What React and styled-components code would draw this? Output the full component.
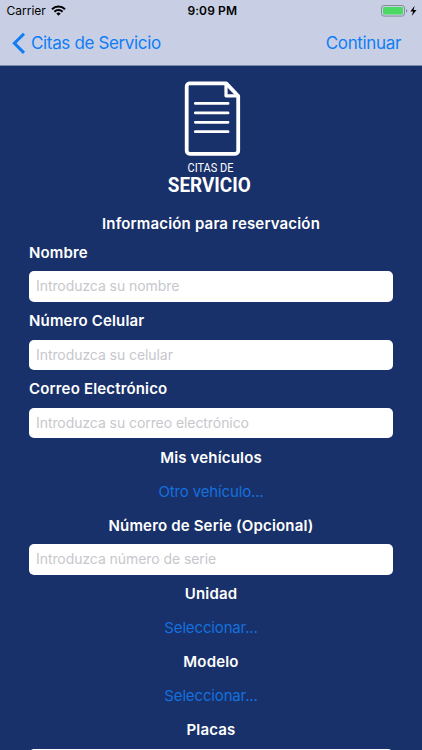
import React, { useState } from "react";
import styled, { createGlobalStyle } from "styled-components";

const fields = [
  { id: "nombre", label: "Nombre", align: "left", placeholder: "Introduzca su nombre" },
  { id: "celular", label: "Número Celular", align: "left", placeholder: "Introduzca su celular" },
  { id: "correo", label: "Correo Electrónico", align: "left", placeholder: "Introduzca su correo electrónico" },
  { id: "vehiculos", label: "Mis vehículos", select: "Otro vehículo..." },
  { id: "serie", label: "Número de Serie (Opcional)", placeholder: "Introduzca número de serie" },
  { id: "unidad", label: "Unidad", select: "Seleccionar..." },
  { id: "modelo", label: "Modelo", select: "Seleccionar..." },
  { id: "placas", label: "Placas", placeholder: "Introduzca sus placas" },
];

const StatusBar = () => (
  <Status>
    <Carrier>
      Carrier
      <svg width="15" height="11" viewBox="0 0 15 11">
        <g fill="none" stroke="#000" strokeWidth="2">
          <path d="M1 4.3a9.2 9.2 0 0 1 13 0" />
          <path d="M3.4 6.8a5.8 5.8 0 0 1 8.2 0" />
        </g>
        <path d="M7.5 10.8 5.3 8.6a3.1 3.1 0 0 1 4.400 0z" />
      </svg>
    </Carrier>
    <Clock>9:09 PM</Clock>
    <Battery>
      <svg width="36" height="12" viewBox="0 0 36 12">
        <rect x="0.5" y="0.5" width="23" height="10.6" rx="2.4" fill="none" stroke="#858b99" />
        <rect x="2" y="2" width="20" height="7.6" rx="1" fill="#4cd964" />
        <path d="M25 4q1.3.4 1.3 1.8T25 7.6z" fill="#858b99" />
        <path d="M33.6.8 29.4 6.4h2.7l-1.3 4.6 4.7-6h-2.9z" />
      </svg>
    </Battery>
  </Status>
);

const Logo = () => (
  <svg width="130" height="130" viewBox="146 70 130 130">
    <g fill="none" stroke="#fff" strokeLinejoin="round">
      <path
        d="M189.700 83.400h36.5l12 12.600v54.8a3 3 0 0 1-3 3h-45.5a3 3 0 0 1-3-3V86.400a3 3 0 0 1 3-3z"
        strokeWidth="3.8"
      />
      <path d="M226 84v11.800h12" strokeWidth="3.2" />
      <path
        d="M195.300 103.400h32.800M195.300 112.900h32.800M195.300 122.300h32.800M195.300 131.700h32.800"
        strokeWidth="2.7"
        strokeLinecap="round"
      />
    </g>
    <g fill="#fff" fontFamily="Roboto, sans-serif">
      <text x="187.5" y="172" fontSize="12.6" textLength="46" lengthAdjust="spacingAndGlyphs">
        CITAS DE
      </text>
      <text x="167.8" y="191.5" fontSize="19.6" fontWeight="700" textLength="83" lengthAdjust="spacingAndGlyphs">
        SERVICIO
      </text>
    </g>
  </svg>
);

const Field = ({ field }) => {
  const [value, setValue] = useState("");

  return (
    <>
      <Row $align={field.align}>
        <Label htmlFor={field.id}>{field.label}</Label>
      </Row>
      <Row>
        {field.select ? (
          <Picker id={field.id} type="button">
            {field.select}
          </Picker>
        ) : (
          <Input
            id={field.id}
            type="text"
            value={value}
            placeholder={field.placeholder}
            onChange={(e) => setValue(e.target.value)}
          />
        )}
      </Row>
    </>
  );
};

const App = () => {
  return (
    <Screen>
      <GlobalStyle />
      <Header>
        <StatusBar />
        <NavBar>
          <NavButton type="button">
            <svg width="14" height="23" viewBox="0 0 14 23">
              <path d="M12 1.700 2.400 11.300 12 20.900" fill="none" stroke="#0f7df5" strokeWidth="3" />
            </svg>
            Citas de Servicio
          </NavButton>
          <NavButton type="button">Continuar</NavButton>
        </NavBar>
      </Header>
      <Content>
        <Logo />
        <Title>Información para reservación</Title>
        <Form>
          {fields.map((field) => (
            <Field key={field.id} field={field} />
          ))}
        </Form>
      </Content>
    </Screen>
  );
};

const GlobalStyle = createGlobalStyle`
  body {
    margin: 0;
    background: #19316a;
  }
  * {
    box-sizing: border-box;
  }
`;

const Screen = styled.div`
  width: 422px;
  height: 750px;
  overflow: hidden;
  display: flex;
  flex-direction: column;
  background: #19316a;
  color: #fff;
  font-family: Inter, "Liberation Sans", sans-serif;
`;

const Header = styled.header`
  flex: none;
  height: 66px;
  background: #c8cfe5;
  border-bottom: 1px solid #7d89ad;
`;

const Status = styled.div`
  display: grid;
  grid-template-columns: 1fr auto 1fr;
  align-items: center;
  height: 21px;
  padding: 0 5px 0 6.5px;
  color: #000;
  font-size: 12px;
`;

const Carrier = styled.div`
  display: flex;
  align-items: center;
  gap: 5px;
`;

const Clock = styled.div`
  padding-left: 1px;
  font-weight: 600;
  letter-spacing: 0.1px;
`;

const Battery = styled.div`
  display: flex;
  justify-content: flex-end;
`;

const NavBar = styled.nav`
  display: flex;
  align-items: center;
  justify-content: space-between;
  height: 44px;
  padding: 0 21px 0 12px;
`;

const NavButton = styled.button`
  display: flex;
  align-items: center;
  gap: 5px;
  padding: 0;
  border: none;
  background: none;
  color: #0f7df5;
  font-family: inherit;
  font-size: 17px;
  letter-spacing: -0.35px;
`;

const Content = styled.main`
  flex: none;
  display: flex;
  flex-direction: column;
  align-items: center;
  padding: 4px 29px 0;
`;

const Title = styled.h1`
  margin: 6px 0 0;
  height: 29.5px;
  line-height: 35px;
  font-size: 15px;
  font-weight: 600;
  letter-spacing: 0.17px;
`;

const Form = styled.form`
  width: 100%;
`;

const Row = styled.div`
  display: flex;
  align-items: center;
  justify-content: ${(props) => (props.$align === "left" ? "flex-start" : "center")};
  height: 34.1px;
`;

const Label = styled.label`
  font-size: 15px;
  font-weight: 600;
  letter-spacing: 0.17px;
`;

const Input = styled.input`
  width: 364px;
  height: 30.4px;
  padding: 0 7px 1.5px;
  border: none;
  border-radius: 5px;
  background: #fff;
  color: #000;
  font-family: inherit;
  font-size: 14px;
  letter-spacing: -0.07px;
  &::placeholder {
    color: #c7c7cc;
    opacity: 1;
  }
`;

const Picker = styled.button`
  padding: 0;
  border: none;
  background: none;
  color: #1470de;
  font-family: inherit;
  font-size: 15px;
  letter-spacing: -0.15px;
`;

export default App;
